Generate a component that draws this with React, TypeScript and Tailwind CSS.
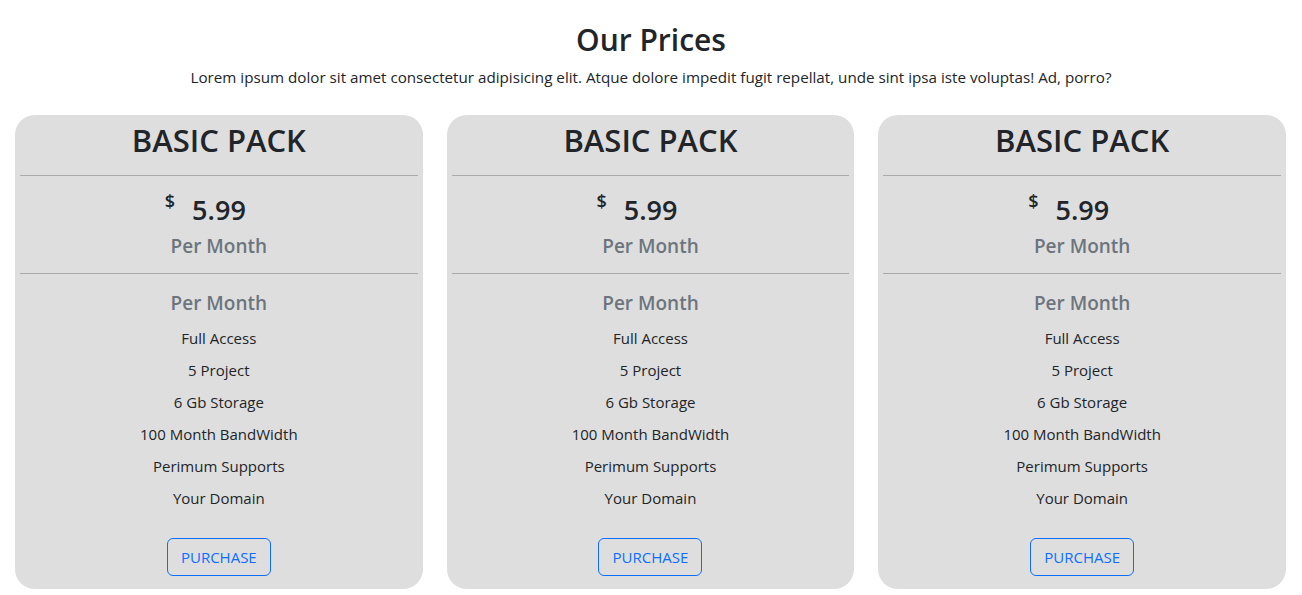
const features = [
  'Full Access',
  '5 Project',
  '6 Gb Storage',
  '100 Month BandWidth',
  'Perimum Supports',
  'Your Domain',
];

const PriceCard = () => {
  return (
    <div className="flex flex-col items-center rounded-[20px] bg-[#dedede] px-[5px] pb-[13px] pt-[2px] text-[#212529]">
      <h1 className="h-[58px] pt-[1px] text-[31px] font-semibold leading-[44px]">
        BASIC PACK
      </h1>
      <div className="h-px w-full bg-[#aaaaaa]" />
      <div className="flex h-[97px] flex-col items-center pt-[16px]">
        <div className="mr-[27px] flex items-start">
          <span className="mr-[17px] mt-[-3px] text-[18px] font-semibold leading-[24px]">
            $
          </span>
          <span className="text-[27px] font-semibold leading-[36px]">5.99</span>
        </div>
        <span className="text-[19px] font-semibold leading-[36px] text-[#6c757d]">
          Per Month
        </span>
      </div>
      <div className="h-px w-full bg-[#aaaaaa]" />
      <div className="flex flex-col items-center pt-[14px]">
        <span className="text-[19px] font-semibold leading-[30px] text-[#6c757d]">
          Per Month
        </span>
        <ul className="mt-[4px] flex flex-col items-center">
          {features.map((f) => (
            <li key={f} className="text-[15px] leading-[32px]">
              {f}
            </li>
          ))}
        </ul>
      </div>
      <button className="mt-[24px] h-[38px] w-[104px] rounded-[6px] border border-[#0d6efd] text-[15px] text-[#0d6efd]">
        PURCHASE
      </button>
    </div>
  );
};

export default function App() {
  return (
    <div
      className="min-h-screen bg-white pb-[6px]"
      style={{ fontFamily: '"Open Sans", "Noto Sans", sans-serif' }}
    >
      <div className="flex flex-col items-center pt-[19px] text-[#212529]">
        <h2 className="text-[30px] font-semibold leading-[42px]">Our Prices</h2>
        <p className="mt-[4px] text-[15.2px] leading-[24px]">
          Lorem ipsum dolor sit amet consectetur adipisicing elit. Atque dolore
          impedit fugit repellat, unde sint ipsa iste voluptas! Ad, porro?
        </p>
      </div>
      <div className="mt-[26px] grid grid-cols-3 gap-[24px] pl-[15px] pr-[16px]">
        <PriceCard />
        <PriceCard />
        <PriceCard />
      </div>
    </div>
  );
}
